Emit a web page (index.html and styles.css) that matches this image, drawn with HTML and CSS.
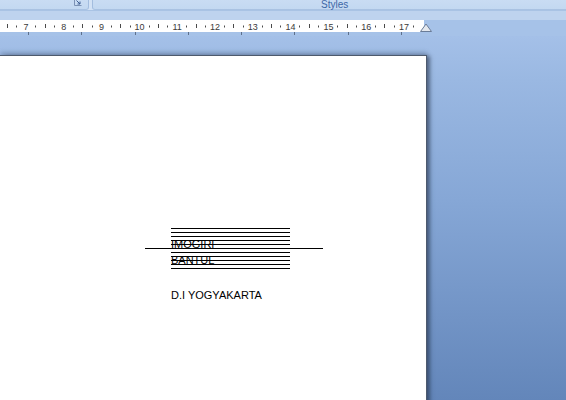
FILE: index.html
```html
<!DOCTYPE html>
<html>
<head>
<meta charset="utf-8">
<link rel="stylesheet" href="styles.css">
</head>
<body>
<div class="app">
  <div class="ribbon">
    <div class="group group-left">
      <span class="launcher">
        <svg width="9" height="8" viewBox="0 0 9 8">
          <path d="M0.5 0 V6.5 H7.5" fill="none" stroke="#7b91b4" stroke-width="1"/>
          <path d="M2.5 1.5 L6 5 M6 2.5 V5 H3.5" fill="none" stroke="#3f5f93" stroke-width="1"/>
        </svg>
      </span>
    </div>
    <div class="group group-styles"><span class="group-label">Styles</span></div>
  </div>
  <div class="ribbon-foot"></div>
  <div class="ruler-row">
    <svg class="ruler" width="566" height="16" viewBox="0 0 566 16">
      <rect x="0" y="0" width="424" height="12" fill="#ffffff"/>
      <g class="ruler-ticks" stroke="#4a4a4a" stroke-width="1">
        <line x1="7.5" y1="4" x2="7.5" y2="8"/>
        <line x1="16.5" y1="5.5" x2="16.5" y2="7.5"/>
        <line x1="35.5" y1="5.5" x2="35.5" y2="7.5"/>
        <line x1="45.5" y1="4" x2="45.5" y2="8"/>
        <line x1="54.5" y1="5.5" x2="54.5" y2="7.5"/>
        <line x1="73.5" y1="5.5" x2="73.5" y2="7.5"/>
        <line x1="82.5" y1="4" x2="82.5" y2="8"/>
        <line x1="92.5" y1="5.5" x2="92.5" y2="7.5"/>
        <line x1="111.5" y1="5.5" x2="111.5" y2="7.5"/>
        <line x1="120.5" y1="4" x2="120.5" y2="8"/>
        <line x1="130.5" y1="5.5" x2="130.5" y2="7.5"/>
        <line x1="149.5" y1="5.5" x2="149.5" y2="7.5"/>
        <line x1="158.5" y1="4" x2="158.5" y2="8"/>
        <line x1="167.5" y1="5.5" x2="167.5" y2="7.5"/>
        <line x1="186.5" y1="5.5" x2="186.5" y2="7.5"/>
        <line x1="196.5" y1="4" x2="196.5" y2="8"/>
        <line x1="205.5" y1="5.5" x2="205.5" y2="7.5"/>
        <line x1="224.5" y1="5.5" x2="224.5" y2="7.5"/>
        <line x1="233.5" y1="4" x2="233.5" y2="8"/>
        <line x1="243.5" y1="5.5" x2="243.5" y2="7.5"/>
        <line x1="262.5" y1="5.5" x2="262.5" y2="7.5"/>
        <line x1="271.5" y1="4" x2="271.5" y2="8"/>
        <line x1="280.5" y1="5.5" x2="280.5" y2="7.5"/>
        <line x1="299.5" y1="5.5" x2="299.5" y2="7.5"/>
        <line x1="309.5" y1="4" x2="309.5" y2="8"/>
        <line x1="318.5" y1="5.5" x2="318.5" y2="7.5"/>
        <line x1="337.5" y1="5.5" x2="337.5" y2="7.5"/>
        <line x1="347.5" y1="4" x2="347.5" y2="8"/>
        <line x1="356.5" y1="5.5" x2="356.5" y2="7.5"/>
        <line x1="375.5" y1="5.5" x2="375.5" y2="7.5"/>
        <line x1="384.5" y1="4" x2="384.5" y2="8"/>
        <line x1="394.5" y1="5.5" x2="394.5" y2="7.5"/>
        <line x1="413.5" y1="5.5" x2="413.5" y2="7.5"/>
      </g>
      <g class="ruler-nums">
        <text x="26" y="9.5">7</text>
        <text x="63.8" y="9.5">8</text>
        <text x="101.6" y="9.5">9</text>
        <text x="139.4" y="9.5">10</text>
        <text x="177.2" y="9.5">11</text>
        <text x="215" y="9.5">12</text>
        <text x="252.8" y="9.5">13</text>
        <text x="290.6" y="9.5">14</text>
        <text x="328.4" y="9.5">15</text>
        <text x="366.2" y="9.5">16</text>
        <text x="404" y="9.5">17</text>
      </g>
      <g class="tab-stops" stroke="#5d6f8b" stroke-width="1">
        <line x1="28.5" y1="12" x2="28.5" y2="15"/>
        <line x1="81.5" y1="12" x2="81.5" y2="15"/>
        <line x1="135.5" y1="12" x2="135.5" y2="15"/>
        <line x1="188.5" y1="12" x2="188.5" y2="15"/>
        <line x1="241.5" y1="12" x2="241.5" y2="15"/>
        <line x1="294.5" y1="12" x2="294.5" y2="15"/>
        <line x1="348.5" y1="12" x2="348.5" y2="15"/>
        <line x1="401.5" y1="12" x2="401.5" y2="15"/>
      </g>
      <path d="M426 4 L431.5 11.5 L420.5 11.5 Z" fill="#e4e8ee" stroke="#6a7c98" stroke-width="1"/>
    </svg>
  </div>
  <div class="workspace">
    <div class="page">
      <div class="linebox">
        <div class="rule"></div>
        <div class="rule"></div>
        <div class="rule"></div>
        <div class="rule"></div>
        <div class="rule"></div>
        <div class="rule rule-long"></div>
        <div class="rule"></div>
        <div class="rule"></div>
        <div class="rule"></div>
        <div class="rule"></div>
        <div class="rule"></div>
        <div class="overlay">
          <p class="doc-line">IMOGIRI</p>
          <p class="doc-line">BANTUL</p>
        </div>
      </div>
      <p class="doc-line doc-region">D.I YOGYAKARTA</p>
    </div>
  </div>
</div>
</body>
</html>
```

FILE: styles.css
```css
* { box-sizing: border-box; }

html, body {
  margin: 0;
  padding: 0;
}

body {
  width: 566px;
  height: 400px;
  overflow: hidden;
  font-family: "Liberation Sans", Arial, sans-serif;
}

.app {
  width: 566px;
  height: 400px;
  display: flex;
  flex-direction: column;
  background: #bfd3ee;
}

/* ribbon bottom strip */
.ribbon {
  height: 11px;
  display: flex;
  gap: 3px;
  background: #d3e2f5;
  border-bottom: 1px solid #a9c3e4;
  flex: none;
}

.group {
  height: 10px;
  background: linear-gradient(#c9dcf3, #c3d8f1);
}

.group-left {
  width: 89px;
  border-right: 1px solid #a3bddf;
  border-bottom: 1px solid #a9c2e2;
  border-bottom-right-radius: 3px;
  display: flex;
  justify-content: flex-end;
  padding-right: 5px;
}

.launcher {
  display: flex;
  align-items: flex-start;
  margin-top: -1px;
}

.group-styles {
  flex: 1;
  border-left: 1px solid #a3bddf;
  border-bottom: 1px solid #a9c2e2;
  border-bottom-left-radius: 3px;
  padding-left: 228px;
}

.group-label {
  display: block;
  font-size: 10px;
  line-height: 9px;
  margin-top: 0;
  color: #3d67a6;
}

.ribbon-foot {
  height: 9px;
  background: #bed3ee;
  flex: none;
}

.ruler-row {
  height: 16px;
  flex: none;
  background: #a6c2e8;
}

.ruler {
  display: block;
}

.ruler-nums text {
  font-family: "Liberation Sans", Arial, sans-serif;
  font-size: 9px;
  fill: #3a3a3a;
  text-anchor: middle;
}

.workspace {
  flex: 1;
  background: linear-gradient(#a4c0e8 0%, #9ab8e2 12%, #86a7d6 45%, #6386ba 100%);
  padding-top: 19px;
  overflow: hidden;
}

.page {
  width: 427px;
  height: 400px;
  background: #ffffff;
  border-top: 1px solid #4e5a6c;
  border-right: 1px solid #4e5a6e;
  box-shadow: 4px 0 4px -1px rgba(30, 40, 62, 0.55), 0 -3px 4px rgba(60, 78, 110, 0.28);
  padding-left: 145px;
  padding-top: 172px;
}

.linebox {
  position: relative;
  display: flex;
  flex-direction: column;
  gap: 3px;
  width: 178px;
}

.rule {
  height: 1px;
  width: 119px;
  margin-left: 26px;
  background: #000000;
}

.rule-long {
  width: 178px;
  margin-left: 0;
}

.overlay {
  position: absolute;
  left: 26px;
  top: 8px;
}

.doc-line {
  margin: 0;
  font-size: 11px;
  line-height: 16px;
  color: #000000;
  white-space: nowrap;
}

.doc-region {
  margin-top: 18px;
  margin-left: 26px;
}
```
